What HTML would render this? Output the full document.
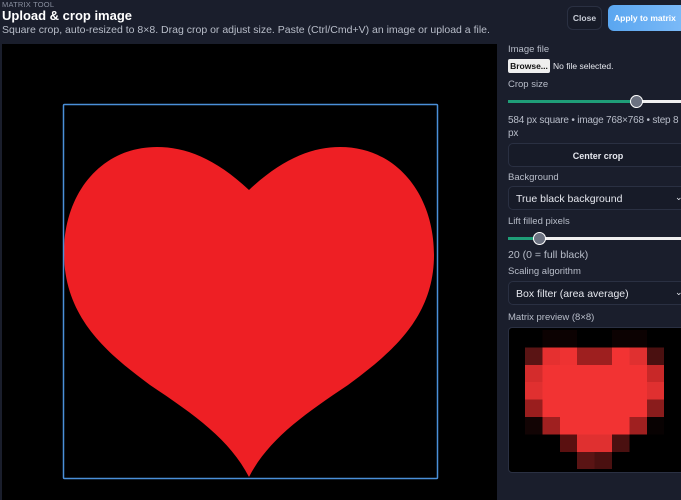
<!DOCTYPE html>
<html><head><style>
body{margin:0;width:681px;height:500px;overflow:hidden;background:#1a1e2c;font-family:"Liberation Sans",sans-serif;color:#e6e8ef;position:relative}
.a{position:absolute;white-space:nowrap}
.lbl{font-size:9.5px;color:#b8bdc9}
.sel{position:absolute;left:508px;width:180px;height:24px;border:1px solid #2a3042;border-radius:5px;background:#171b28;font-size:10.5px;color:#e6e8ef;box-sizing:border-box;padding:6px 0 0 7px}
.sel span{position:absolute;left:166px;top:5px;font-size:9px}
.trk{position:absolute;height:3px;background:#f0f0f0;left:508px;width:173px}
.trk b{position:absolute;left:0;top:0;height:3px;background:#1f9e78}
.th{position:absolute;width:11px;height:11px;border-radius:50%;background:#6b7180;border:1.5px solid #fff;top:-5.5px}
</style></head><body>
<div class="a" style="left:2px;top:0;font-size:7.5px;color:#8a90a0;letter-spacing:.2px">MATRIX TOOL</div>
<div class="a" style="left:2px;top:8px;font-size:13px;font-weight:bold;color:#fff">Upload &amp; crop image</div>
<div class="a" style="left:2px;top:24px;font-size:10.5px;color:#b8bdc9">Square crop, auto-resized to 8×8. Drag crop or adjust size. Paste (Ctrl/Cmd+V) an image or upload a file.</div>
<div class="a" style="left:567px;top:6px;width:35px;height:24px;border:1px solid #2a3042;border-radius:6px;background:#171b28;box-sizing:border-box;font-size:8.5px;font-weight:bold;text-align:center;line-height:22px;color:#c8ccd6">Close</div>
<div class="a" style="left:608px;top:5px;width:80px;height:26px;border-radius:6px;background:linear-gradient(90deg,#5aa6f0,#7dbbf8);font-size:8.5px;font-weight:bold;line-height:26px;padding-left:6px;box-sizing:border-box;color:#fff">Apply to matrix</div>
<svg class="a" style="left:2px;top:44px" width="495" height="456">
<rect width="495" height="456" fill="#000"/>
<g transform="translate(-2,-44)">
<path d="M249,190 C215,158 185,147 157,147 C100,147 63,195 64,255 C65,320 110,355 150,385 C195,415 230,440 249,477 C268,440 303,415 348,385 C388,355 434,320 434,255 C434,195 397,147 340,147 C313,147 283,158 249,190 Z" fill="#ee1f24"/>
<rect x="63.5" y="104.5" width="374" height="374" fill="none" stroke="#4a8fd8" stroke-width="1.5" rx="1"/>
</g></svg>
<div class="a lbl" style="left:508px;top:44px">Image file</div>
<div class="a" style="left:508px;top:59px;width:42px;height:14px;background:#eee;border-radius:2px;font-size:8.5px;font-weight:bold;color:#111;text-align:center;line-height:14px">Browse...</div>
<div class="a" style="left:553px;top:61px;font-size:8.5px;color:#e6e8ef">No file selected.</div>
<div class="a lbl" style="left:508px;top:79px">Crop size</div>
<div class="trk" style="top:100px"><b style="width:128px"></b><div class="th" style="left:122px"></div></div>
<div class="a" style="left:508px;top:114px;font-size:10px;letter-spacing:-0.2px;color:#b8bdc9;line-height:13px">584 px square • image 768×768 • step 8<br>px</div>
<div class="sel" style="top:143px;height:24px;text-align:center;padding:7px 0 0;font-size:9px;font-weight:bold">Center crop</div>
<div class="a lbl" style="left:508px;top:172px">Background</div>
<div class="sel" style="top:186px">True black background<span>⌄</span></div>
<div class="a lbl" style="left:508px;top:216px">Lift filled pixels</div>
<div class="trk" style="top:237px"><b style="width:30px"></b><div class="th" style="left:25px"></div></div>
<div class="a" style="left:508px;top:249px;font-size:10.5px;color:#b8bdc9">20 (0 = full black)</div>
<div class="a lbl" style="left:508px;top:266px">Scaling algorithm</div>
<div class="sel" style="top:281px">Box filter (area average)<span>⌄</span></div>
<div class="a lbl" style="left:508px;top:312px">Matrix preview (8×8)</div>
<div class="a" style="left:508px;top:327px;width:180px;height:146px;background:#000;border:1px solid #2a3042;border-radius:4px;box-sizing:border-box"></div>
<svg class="a" style="left:525px;top:330px" width="140" height="140" shape-rendering="crispEdges">
<g transform="scale(17.4)">
<rect x="1" y="0" width="2" height="1" fill="#0c0202"/><rect x="5" y="0" width="2" height="1" fill="#0c0202"/>
<rect x="0" y="1" width="1" height="1" fill="#5a1414"/><rect x="1" y="1" width="1" height="1" fill="#e53030"/><rect x="2" y="1" width="1" height="1" fill="#ee3232"/><rect x="3" y="1" width="2" height="1" fill="#9e1f1f"/><rect x="5" y="1" width="1" height="1" fill="#f23333"/><rect x="6" y="1" width="1" height="1" fill="#e03030"/><rect x="7" y="1" width="1" height="1" fill="#4a1010"/>
<rect x="0" y="2" width="8" height="3" fill="#f23333"/>
<rect x="0" y="2" width="1" height="1" fill="#d42c2c"/><rect x="7" y="2" width="1" height="1" fill="#c82828"/>
<rect x="0" y="3" width="1" height="1" fill="#e03030"/><rect x="7" y="3" width="1" height="1" fill="#e03030"/>
<rect x="0" y="4" width="1" height="1" fill="#9a1e1e"/><rect x="7" y="4" width="1" height="1" fill="#8a1c1c"/>
<rect x="0" y="5" width="1" height="1" fill="#120404"/><rect x="1" y="5" width="1" height="1" fill="#a02020"/><rect x="2" y="5" width="4" height="1" fill="#f23333"/><rect x="6" y="5" width="1" height="1" fill="#a02020"/><rect x="7" y="5" width="1" height="1" fill="#080202"/>
<rect x="2" y="6" width="1" height="1" fill="#5a1010"/><rect x="3" y="6" width="2" height="1" fill="#e03030"/><rect x="5" y="6" width="1" height="1" fill="#4a1010"/>
<rect x="3" y="7" width="1" height="1" fill="#5a1414"/><rect x="4" y="7" width="1" height="1" fill="#4a1010"/>
</g></svg>
</body></html>
